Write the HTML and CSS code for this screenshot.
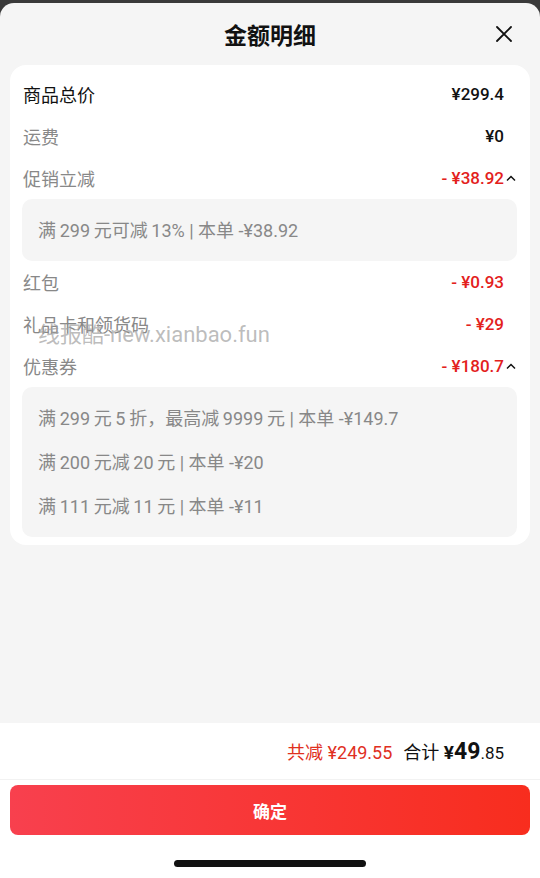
FILE: index.html
```html
<!DOCTYPE html>
<html>
<head>
    <meta charset="utf-8">
    <title>金额明细</title>
    <link rel="stylesheet" href="styles.css">
</head>
<body>
    <div class="sheet">
        <div class="header">
            <h2 class="title">金额明细</h2>
            <svg class="close" width="18" height="18" viewBox="0 0 18 18">
                <path d="M2 2L16 16M16 2L2 16" stroke="#111" stroke-width="1.8" stroke-linecap="round"/>
            </svg>
        </div>

        <div class="card">
            <div class="row">
                <span class="label strong">商品总价</span>
                <span class="value">¥299.4</span>
            </div>
            <div class="row">
                <span class="label">运费</span>
                <span class="value">¥0</span>
            </div>
            <div class="row">
                <span class="label">促销立减</span>
                <span class="value red open">- ¥38.92<svg class="caret" width="12" height="8" viewBox="0 0 12 8"><path d="M2 6.5L6 2.5L10 6.5" fill="none" stroke="#111" stroke-width="1.5"/></svg></span>
            </div>
            <div class="detail">
                <div class="detail-line">满&thinsp;299&thinsp;元可减&thinsp;13% | 本单 -¥38.92</div>
            </div>
            <div class="row">
                <span class="label">红包</span>
                <span class="value red">- ¥0.93</span>
            </div>
            <div class="row">
                <span class="label">礼品卡和领货码</span>
                <span class="value red">- ¥29</span>
            </div>
            <div class="row">
                <span class="label">优惠券</span>
                <span class="value red open">- ¥180.7<svg class="caret" width="12" height="8" viewBox="0 0 12 8"><path d="M2 6.5L6 2.5L10 6.5" fill="none" stroke="#111" stroke-width="1.5"/></svg></span>
            </div>
            <div class="detail">
                <div class="detail-line">满&thinsp;299&thinsp;元&thinsp;5&thinsp;折，最高减&thinsp;9999&thinsp;元 | 本单 -¥149.7</div>
                <div class="detail-line">满&thinsp;200&thinsp;元减&thinsp;20&thinsp;元 | 本单 -¥20</div>
                <div class="detail-line">满&thinsp;111&thinsp;元减&thinsp;11&thinsp;元 | 本单 -¥11</div>
            </div>
            <div class="watermark">线报酷-new.xianbao.fun</div>
        </div>

        <div class="spacer"></div>

        <div class="footer">
            <div class="summary">
                <span class="saved">共减 ¥249.55</span>
                <span class="total">合计 <b class="yen">¥</b><b class="int">49</b><span class="dec">.85</span></span>
            </div>
            <button class="confirm">确定</button>
            <div class="home-bar"></div>
        </div>
    </div>
</body>
</html>
```

FILE: styles.css
```css
body {
    margin: 0;
    background: #3a3a3a;
    font-family: Roboto, "Noto Sans CJK SC", sans-serif;
    color: #111;
}
.sheet {
    margin-top: 3px;
    height: 875px;
    background: #f5f5f5;
    border-radius: 14px 14px 0 0;
    display: flex;
    flex-direction: column;
    overflow: hidden;
}
.header {
    height: 62px;
    position: relative;
    display: flex;
    align-items: center;
    justify-content: center;
}
.title {
    margin: 0;
    font-size: 23px;
    font-weight: bold;
    font-family: "Noto Sans CJK SC", sans-serif;
}
.close {
    position: absolute;
    right: 27px;
    top: 22px;
}
.card {
    position: relative;
    margin: 0 10px;
    padding: 8px 13px 8px 12px;
    background: #fff;
    border-radius: 16px;
}
.row {
    height: 42px;
    display: flex;
    align-items: center;
    justify-content: space-between;
}
.label {
    font-size: 18px;
    color: #888;
    padding-left: 1px;
}
.label.strong {
    color: #111;
}
.value {
    font-size: 17px;
    font-weight: 500;
    padding-right: 13px;
    display: flex;
    align-items: center;
}
.value.red {
    color: #e3211c;
}
.value.open {
    padding-right: 0;
}
.caret {
    margin-left: 1px;
}
.detail {
    background: #f5f5f5;
    border-radius: 10px;
    padding: 10px 16px 8px;
}
.detail-line {
    height: 44px;
    line-height: 44px;
    font-size: 18px;
    color: #888;
}
.watermark {
    position: absolute;
    left: 28px;
    top: 251px;
    font-size: 22px;
    color: rgba(160, 160, 160, 0.7);
    pointer-events: none;
}
.spacer {
    flex: 1;
}
.footer {
    height: 155px;
    background: #fff;
}
.summary {
    height: 56px;
    display: flex;
    align-items: center;
    justify-content: flex-end;
    padding-right: 36px;
    border-bottom: 1px solid #f2f2f2;
    font-size: 18px;
}
.saved {
    color: #e0301e;
    margin-right: 11px;
}
.total b {
    font-weight: bold;
}
.yen {
    font-size: 19px;
}
.int {
    font-size: 23px;
}
.dec {
    font-size: 17px;
}
.confirm {
    display: block;
    margin: 5px 10px 0;
    width: 520px;
    height: 50px;
    border: none;
    border-radius: 8px;
    background: linear-gradient(90deg, #f8404e, #f82d1e);
    color: #fff;
    font-size: 17px;
    font-weight: bold;
    font-family: "Noto Sans CJK SC", sans-serif;
}
.home-bar {
    width: 192px;
    height: 7px;
    margin: 25px auto 0;
    background: #111;
    border-radius: 4px;
}
```
